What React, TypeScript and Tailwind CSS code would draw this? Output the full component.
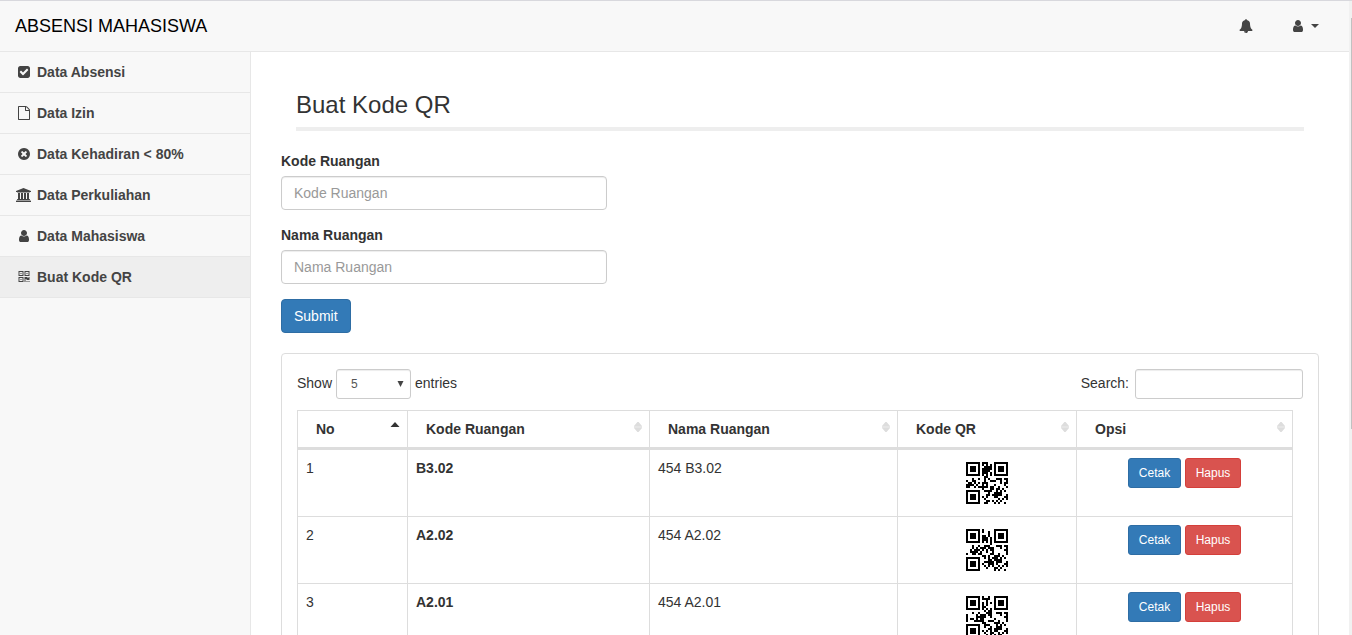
import React from 'react';

const DATA_WORDS = 9;
const ECC_WORDS = 17;
const LEVEL_H = 2;
const SIZE = 21;

function gfMul(a: number, b: number): number {
  let z = 0;
  for (let i = 7; i >= 0; i--) {
    z = (z << 1) ^ ((z >>> 7) * 0x11d);
    z ^= ((b >>> i) & 1) * a;
  }
  return z & 0xff;
}

function reedSolomon(data: number[], degree: number): number[] {
  const div: number[] = new Array(degree).fill(0);
  div[degree - 1] = 1;
  let root = 1;
  for (let i = 0; i < degree; i++) {
    for (let j = 0; j < degree; j++) {
      div[j] = gfMul(div[j], root);
      if (j + 1 < degree) div[j] ^= div[j + 1];
    }
    root = gfMul(root, 2);
  }
  const res: number[] = new Array(degree).fill(0);
  for (const b of data) {
    const f = b ^ (res.shift() as number);
    res.push(0);
    div.forEach((c, i) => (res[i] ^= gfMul(c, f)));
  }
  return res;
}

const MASK = 7;
const masked = (x: number, y: number) => (((x + y) % 2) + ((x * y) % 3)) % 2 === 0;

/** Version 1-H QR symbol in byte mode, as rows of dark/light modules. */
function encodeQr(text: string): boolean[][] {
  let bits = '0100' + text.length.toString(2).padStart(8, '0');
  for (const c of text) bits += c.charCodeAt(0).toString(2).padStart(8, '0');
  bits += '0000';
  const words = (bits.match(/.{8}/g) as string[]).map((b) => parseInt(b, 2));
  for (let pad = 0xec; words.length < DATA_WORDS; pad ^= 0xec ^ 0x11) words.push(pad);
  const all = words.concat(reedSolomon(words, ECC_WORDS));

  const grid: boolean[][] = Array.from({ length: SIZE }, () => new Array(SIZE).fill(false));
  const fixed: boolean[][] = Array.from({ length: SIZE }, () => new Array(SIZE).fill(false));
  const set = (x: number, y: number, v: boolean) => {
    grid[y][x] = v;
    fixed[y][x] = true;
  };
  for (let i = 0; i < SIZE; i++) {
    set(6, i, i % 2 === 0);
    set(i, 6, i % 2 === 0);
  }
  for (const [cx, cy] of [[3, 3], [SIZE - 4, 3], [3, SIZE - 4]]) {
    for (let dy = -4; dy <= 4; dy++) {
      for (let dx = -4; dx <= 4; dx++) {
        const d = Math.max(Math.abs(dx), Math.abs(dy));
        const x = cx + dx;
        const y = cy + dy;
        if (x >= 0 && x < SIZE && y >= 0 && y < SIZE) set(x, y, d !== 2 && d !== 4);
      }
    }
  }
  const fmt = (LEVEL_H << 3) | MASK;
  let rem = fmt;
  for (let i = 0; i < 10; i++) rem = (rem << 1) ^ ((rem >>> 9) * 0x537);
  const f = ((fmt << 10) | rem) ^ 0x5412;
  const bit = (i: number) => ((f >>> i) & 1) === 1;
  for (let i = 0; i <= 5; i++) set(8, i, bit(i));
  set(8, 7, bit(6));
  set(8, 8, bit(7));
  set(7, 8, bit(8));
  for (let i = 9; i < 15; i++) set(14 - i, 8, bit(i));
  for (let i = 0; i < 8; i++) set(SIZE - 1 - i, 8, bit(i));
  for (let i = 8; i < 15; i++) set(8, SIZE - 15 + i, bit(i));
  set(8, SIZE - 8, true);

  let n = 0;
  for (let right = SIZE - 1; right >= 1; right -= 2) {
    if (right === 6) right = 5;
    for (let v = 0; v < SIZE; v++) {
      for (let j = 0; j < 2; j++) {
        const x = right - j;
        const up = ((right + 1) & 2) === 0;
        const y = up ? SIZE - 1 - v : v;
        if (fixed[y][x]) continue;
        const on = n < all.length * 8 && ((all[n >>> 3] >>> (7 - (n & 7))) & 1) === 1;
        grid[y][x] = on !== masked(x, y);
        n++;
      }
    }
  }
  return grid;
}

function QrCode({ text }: { text: string }) {
  let d = '';
  encodeQr(text).forEach((row, y) =>
    row.forEach((on, x) => {
      if (on) d += `M${x + 2} ${y + 2}h1v1h-1z`;
    }),
  );
  return (
    <svg viewBox="0 0 25 25" shapeRendering="crispEdges" className="h-[50px] w-[50px]">
      <path d={d} fill="#000" />
    </svg>
  );
}

const PATHS = {
  user: 'M1536 1399q0 109-62.5 187t-150.5 78h-854q-88 0-150.5-78t-62.5-187q0-85 8.5-160.5t31.5-152 58.5-131 94-89 134.5-34.5q131 128 313 128t313-128q76 0 134.5 34.5t94 89 58.5 131 31.5 152 8.5 160.5zm-256-887q0 159-112.5 271.5t-271.5 112.5-271.5-112.5-112.5-271.5 112.5-271.5 271.5-112.5 271.5 112.5 112.5 271.5z',
  bell: 'M912 1696q0-16-16-16-59 0-101.5-42.5t-42.5-101.5q0-16-16-16t-16 16q0 73 51.5 124.5t124.5 51.5q16 0 16-16zm816-288q0 52-38 90t-90 38h-448q0 106-75 181t-181 75-181-75-75-181h-448q-52 0-90-38t-38-90q50-42 91-88t85-119.5 74.5-158.5 50-206 19.5-260q0-152 117-282.5t307-158.5q-8-19-8-39 0-40 28-68t68-28 68 28 28 68q0 20-8 39 190 28 307 158.5t117 282.5q0 139 19.5 260t50 206 74.5 158.5 85 119.5 91 88z',
  check: 'M813 1299l614-614q19-19 19-45t-19-45l-102-102q-19-19-45-19t-45 19l-467 467-211-211q-19-19-45-19t-45 19l-102 102q-19 19-19 45t19 45l358 358q19 19 45 19t45-19zm851-883v960q0 119-84.5 203.5t-203.5 84.5h-960q-119 0-203.5-84.5t-84.5-203.5v-960q0-119 84.5-203.5t203.5-84.5h960q119 0 203.5 84.5t84.5 203.5z',
  times: 'M1277 1122q0-26-19-45l-181-181 181-181q19-19 19-45 0-27-19-46l-90-90q-19-19-46-19-26 0-45 19l-181 181-181-181q-19-19-45-19-27 0-46 19l-90 90q-19 19-19 46 0 26 19 45l181 181-181 181q-19 19-19 45 0 27 19 46l90 90q19 19 46 19 26 0 45-19l181-181 181 181q19 19 45 19 27 0 46-19l90-90q19-19 19-46zm387-226q0 209-103 385.5t-279.5 279.5-385.5 103-385.5-103-279.5-279.5-103-385.5 103-385.5 279.5-279.5 385.5-103 385.5 103 279.5 279.5 103 385.5z',
  file: 'M1596 380q28 28 48 76t20 88v1152q0 40-28 68t-68 28h-1344q-40 0-68-28t-28-68v-1600q0-40 28-68t68-28h896q40 0 88 20t76 48zm-444-244v376h376q-10-29-22-41l-313-313q-12-12-41-22zm384 1528v-1024h-416q-40 0-68-28t-28-68v-416h-768v1536h1280z',
  university: 'M960 0l960 384v128h-128q0 26-20.5 45t-48.5 19h-1526q-28 0-48.5-19t-20.5-45h-128v-128zm-704 640h256v768h128v-768h256v768h128v-768h256v768h128v-768h256v768h59q28 0 48.5 19t20.5 45v64h-1664v-64q0-26 20.5-45t48.5-19h59v-768zm1595 960q28 0 48.5 19t20.5 45v128h-1920v-128q0-26 20.5-45t48.5-19h1782z',
  qrcode: 'M576 1152v128h-128v-128h128zm0-768v128h-128v-128h128zm768 0v128h-128v-128h128zm-1024 1023h384v-383h-384v383zm0-767h384v-384h-384v384zm768 0h384v-384h-384v384zm-256 256v640h-640v-640h640zm512 512v128h-128v-128h128zm256 0v128h-128v-128h128zm0-512v384h-384v-128h-128v384h-128v-640h384v128h128v-128h128zm-768-768v640h-640v-640h640zm768 0v640h-640v-640h640z',
};
type IconName = keyof typeof PATHS;

function Icon({ name }: { name: IconName }) {
  const wide = name === 'university';
  return (
    <span className={`flex w-[18px] shrink-0 ${wide ? 'justify-start pl-px' : 'justify-center'}`}>
      <svg
        viewBox={wide ? '0 0 1920 1792' : '0 0 1792 1792'}
        className={wide ? 'h-[14px] w-[15px] shrink-0' : 'h-[14px] w-[14px] shrink-0'}
        fill="currentColor"
      >
        <path d={PATHS[name]} />
      </svg>
    </span>
  );
}

const MENU: { label: string; icon: IconName; active?: boolean }[] = [
  { label: 'Data Absensi', icon: 'check' },
  { label: 'Data Izin', icon: 'file' },
  { label: 'Data Kehadiran < 80%', icon: 'times' },
  { label: 'Data Perkuliahan', icon: 'university' },
  { label: 'Data Mahasiswa', icon: 'user' },
  { label: 'Buat Kode QR', icon: 'qrcode', active: true },
];

const ROWS = ['B3.02', 'A2.02', 'A2.01'];
const COLS = 'grid grid-cols-[110px_242px_248px_179px_216px]';

function SortBoth() {
  return (
    <svg viewBox="0 0 8 10" className="mt-[-4px] h-[10px] w-[8px]" fill="#dddddd">
      <path d="M3.4 0h1.2L8 4v.7H0V4zM3.4 10h1.2L8 6v-.7H0V6z" />
    </svg>
  );
}

function Field({ label }: { label: string }) {
  return (
    <div className="mb-[15px]">
      <label className="mb-[5px] block font-bold">{label}</label>
      <input
        placeholder={label}
        className="block h-[34px] w-[326px] rounded-[4px] border border-[#cccccc] bg-white px-3 py-[6px] shadow-[inset_0_1px_1px_rgba(0,0,0,0.075)] placeholder:text-[#999999]"
      />
    </div>
  );
}

export default function App() {
  return (
    <div className="flex h-[635px] w-full overflow-hidden bg-white font-['Liberation_Sans',Arial,sans-serif] text-[14px] leading-[20px] text-[#333333]">
      <div className="flex min-w-0 flex-1 flex-col border-t border-[#d8d8dd]">
        <header className="flex h-[51px] shrink-0 items-center justify-between border-b border-[#e7e7e7] bg-[#f8f8f8] pr-[30px] pl-[15px]">
          <span className="text-[18px] text-black">ABSENSI MAHASISWA</span>
          <div className="flex items-center text-[#444444]">
            <Icon name="bell" />
            <div className="ml-[34px] flex items-center">
              <Icon name="user" />
              <svg viewBox="0 0 8 4" className="ml-[4px] h-[4px] w-[8px]" fill="currentColor">
                <path d="M0 0h8L4 4z" />
              </svg>
            </div>
          </div>
        </header>
        <div className="flex min-h-0 flex-1">
          <aside className="w-[251px] shrink-0 border-r border-[#e7e7e7] bg-[#f8f8f8]">
            {MENU.map((m) => (
              <a
                key={m.label}
                className={`flex h-[41px] items-center border-b border-[#e7e7e7] pl-[15px] font-bold text-[#444444] ${m.active ? 'bg-[#eeeeee]' : ''}`}
              >
                <Icon name={m.icon} />
                <span className="ml-[4px]">{m.label}</span>
              </a>
            ))}
          </aside>
          <main className="min-w-0 flex-1 overflow-hidden pt-[40px] pr-[30px] pl-[30px]">
            <h3 className="mx-[15px] mb-[20px] border-b-4 border-[#eeeeee] pb-[9px] text-[24px] leading-[26px]">Buat Kode QR</h3>
            <Field label="Kode Ruangan" />
            <Field label="Nama Ruangan" />
            <button className="block h-[34px] rounded-[4px] border border-[#2e6da4] bg-[#337ab7] px-3 text-white">Submit</button>
            <section className="mt-[20px] h-[420px] rounded-[4px] border border-[#dddddd] p-[15px]">
              <div className="flex h-[30px] items-center justify-between">
                <div className="flex items-center">
                  <span className="relative -top-px">Show</span>
                  <span className="mx-[4px] flex h-[30px] w-[75px] items-center justify-between rounded-[3px] border border-[#cccccc] pr-[6px] pl-[14px] text-[12px] text-[#555555] shadow-[inset_0_1px_1px_rgba(0,0,0,0.075)]">
                    5
                    <svg viewBox="0 0 7 6" className="h-[6px] w-[7px]" fill="#444444">
                      <path d="M.5 0h6L3.5 6z" />
                    </svg>
                  </span>
                  <span className="relative -top-px">entries</span>
                </div>
                <div className="flex items-center">
                  <span className="relative -top-px">Search:</span>
                  <input className="ml-[6px] h-[30px] w-[168px] rounded-[3px] border border-[#cccccc] px-[10px] text-[12px] shadow-[inset_0_1px_1px_rgba(0,0,0,0.075)]" />
                </div>
              </div>
              <div className="mt-[11px] w-[996px] border-t border-l border-[#dddddd]">
                <div className={`${COLS} border-b-[3px] border-[#dddddd] font-bold`}>
                  {['No', 'Kode Ruangan', 'Nama Ruangan', 'Kode QR', 'Opsi'].map((h, i) => (
                    <div key={h} className="flex h-[36px] items-center justify-between border-r border-[#dddddd] pr-[7px] pl-[18px]">
                      {h}
                      {i === 0 ? (
                        <svg viewBox="0 0 10 5" className="mt-[-9px] h-[5px] w-[10px]" fill="#333333">
                          <path d="M5 0l4.5 5h-9z" />
                        </svg>
                      ) : (
                        <SortBoth />
                      )}
                    </div>
                  ))}
                </div>
                {ROWS.map((code, i) => (
                  <div key={code} className={`${COLS} h-[67px] border-b border-[#dddddd] *:border-r *:border-[#dddddd] *:p-[8px]`}>
                    <div>{i + 1}</div>
                    <div className="font-bold">{code}</div>
                    <div>454 {code}</div>
                    <div className="flex justify-center">
                      <QrCode text={code} />
                    </div>
                    <div className="flex justify-center gap-[4px] text-[12px] text-white">
                      <button className="h-[30px] w-[53px] rounded-[3px] border border-[#2e6da4] bg-[#337ab7]">Cetak</button>
                      <button className="h-[30px] w-[56px] rounded-[3px] border border-[#d43f3a] bg-[#d9534f]">Hapus</button>
                    </div>
                  </div>
                ))}
              </div>
            </section>
          </main>
        </div>
      </div>
      <div className="w-[3px] shrink-0 border-t border-[#d8d8dd] bg-[#f1f1f1] pt-[17px] pl-[2px]">
        <div className="h-[411px] w-px bg-[#c1c1c1]" />
      </div>
    </div>
  );
}
